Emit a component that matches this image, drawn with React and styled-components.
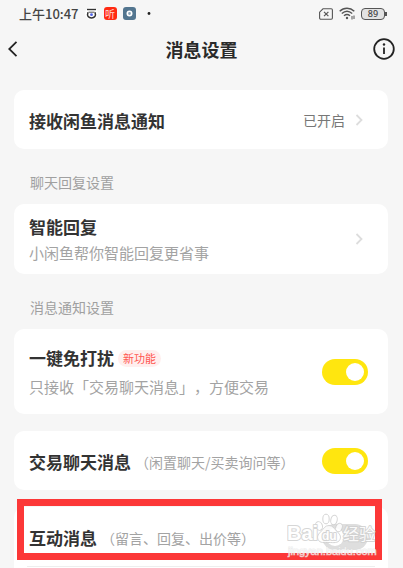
import styled, { createGlobalStyle } from "styled-components";

const GlobalStyle = createGlobalStyle`
  * {
    box-sizing: border-box;
  }
  body {
    margin: 0;
    background: #f6f6f6;
    color: #333333;
    font-family: "Noto Sans CJK SC", sans-serif;
    text-spacing-trim: space-all;
  }
`;

const Page = styled.div`
  display: flex;
  flex-direction: column;
  min-height: 100vh;
`;

const StatusBar = styled.div`
  display: flex;
  align-items: center;
  justify-content: space-between;
  height: 27px;
  padding: 0 16px 0 19px;
`;
const StatusGroup = styled.div`
  display: flex;
  align-items: center;
  gap: 6px;
`;
const Clock = styled.span`
  font-size: 13px;
  line-height: 27px;
  font-weight: 500;
  color: #444444;
`;
const AppBadge = styled.span`
  display: flex;
  align-items: center;
  justify-content: center;
  width: 13px;
  height: 13px;
  border-radius: 3px;
  background: #ff2a12;
  color: #ffd9d2;
  font-size: 10px;
  line-height: 13px;
`;
const Battery = styled.span`
  position: relative;
  width: 24px;
  height: 12px;
  border: 1px solid #555555;
  border-radius: 4px;
  background: #e2e2e2;
  color: #444444;
  font-family: "Noto Sans", sans-serif;
  font-size: 9px;
  font-weight: 500;
  line-height: 10px;
  text-align: center;
  margin-right: 2px;
  &::after {
    content: "";
    position: absolute;
    right: -3px;
    top: 3px;
    width: 2px;
    height: 4px;
    background: #555555;
  }
`;

const NavBar = styled.header`
  display: grid;
  grid-template-columns: 40px 1fr 40px;
  align-items: center;
  height: 43px;
`;
const NavTitle = styled.h1`
  margin: 0;
  font-size: 18px;
  line-height: 24px;
  font-weight: 700;
  text-align: center;
  color: #2a2a2a;
`;
const NavButton = styled.button`
  display: flex;
  justify-content: ${({ $side }) => ($side === "left" ? "flex-start" : "flex-end")};
  padding: 0 8px;
  border: 0;
  background: none;
  color: #222222;
  cursor: pointer;
`;

const Content = styled.main`
  display: flex;
  flex: 1;
  flex-direction: column;
  padding: 20px 15px 0 14px;
`;
const Card = styled.section`
  position: relative;
  flex: ${({ $open }) => ($open ? "1 0 auto" : "none")};
  background: #ffffff;
  border-radius: ${({ $open }) => ($open ? "10px 10px 0 0" : "10px")};
  & + & {
    margin-top: 17px;
  }
`;
const SectionLabel = styled.h2`
  margin: 0;
  padding: 21px 16px 10px;
  font-size: 14px;
  line-height: 24px;
  font-weight: 400;
  color: #a0a0a0;
`;
const Row = styled.div`
  display: flex;
  align-items: center;
  justify-content: space-between;
  min-height: ${({ $height }) => $height || "59px"};
  padding: 0 20px 0 15px;
`;
const LinkRow = styled(Row).attrs({ as: "a" })`
  padding-right: 25px;
  color: inherit;
  text-decoration: none;
`;
const Texts = styled.div`
  display: flex;
  flex-direction: column;
  gap: ${({ $gap }) => $gap || "0"};
  padding-top: 2px;
`;
const TitleLine = styled.div`
  display: flex;
  align-items: center;
  white-space: nowrap;
`;
const Title = styled.label`
  font-size: 17px;
  line-height: 24px;
  font-weight: 700;
`;
const Hint = styled.span`
  font-size: 15px;
  line-height: 24px;
  color: #a3a3a3;
  white-space: nowrap;
`;
const InlineHint = styled(Hint)`
  margin-left: 4px;
  font-size: 14px;
`;
const NewTag = styled.span`
  margin-left: 4px;
  padding: 0 5px;
  border-radius: 9px;
  background: #ffefee;
  color: #ff5550;
  font-size: 11px;
  line-height: 17px;
`;
const Value = styled.span`
  display: flex;
  align-items: center;
  gap: 10px;
  font-size: 14px;
  line-height: 24px;
  color: #777777;
`;
const Switch = styled.input.attrs({ type: "checkbox", role: "switch" })`
  appearance: none;
  flex: none;
  width: 46px;
  height: 26px;
  margin: 0;
  padding: 4px;
  border-radius: 13px;
  background: #dedede;
  cursor: pointer;
  &::before {
    content: "";
    display: block;
    width: 18px;
    height: 18px;
    border-radius: 50%;
    background: #ffffff;
  }
  &:checked {
    background: #ffe60f;
  }
  &:checked::before {
    margin-left: auto;
  }
`;
const Divider = styled.hr`
  height: 1px;
  margin: 0 13px;
  border: 0;
  background: #eeeeee;
`;
const HighlightFrame = styled.div`
  position: absolute;
  top: -8px;
  left: 3px;
  right: 6px;
  height: 61px;
  border: 7px solid #fc3838;
  pointer-events: none;
`;
const Watermark = styled.svg`
  position: absolute;
  top: 4px;
  right: 9px;
  opacity: 0.85;
  pointer-events: none;
`;

function Chevron() {
  return (
    <svg width="8" height="12" viewBox="0 0 8 12" fill="none" stroke="#dddddd" strokeWidth="1.8">
      <path d="M1.5 1l5 5-5 5" />
    </svg>
  );
}

function StatusIcons() {
  return (
    <>
      <svg width="13" height="13" viewBox="0 0 13 13">
        <circle cx="6.5" cy="6.5" r="6.5" fill="#ffffff" />
        <path d="M2 2.5h9" stroke="#333333" strokeWidth="1.4" />
        <path d="M3 5.2C1.6 9 3.6 11 6.5 11S11.4 9 10 5.2" fill="none" stroke="#333333" strokeWidth="1.5" />
        <path d="M3.5 5.2h6" stroke="#555555" strokeWidth="1" />
        <circle cx="6.5" cy="7.7" r="1.4" fill="#4f63e8" />
      </svg>
      <AppBadge>听</AppBadge>
      <svg width="13" height="13" viewBox="0 0 13 13">
        <rect width="13" height="13" rx="3" fill="#52758f" />
        <circle cx="6.5" cy="6.5" r="2.2" fill="#8ba5b8" stroke="#ffffff" strokeWidth="1.6" />
      </svg>
      <svg width="13" height="13" viewBox="0 0 13 13">
        <circle cx="7" cy="6.5" r="1.4" fill="#222222" />
      </svg>
    </>
  );
}

function SignalIcons() {
  return (
    <>
      <svg width="14" height="12" viewBox="0 0 14 12" fill="none" stroke="#555555">
        <path d="M4 .8h8.2a1.2 1.2 0 0 1 1.2 1.2v8a1.2 1.2 0 0 1-1.2 1.2H1.8A1.2 1.2 0 0 1 .6 10V4.2z" strokeWidth="1.1" />
        <path d="M5 3.8l4.4 4.4M9.4 3.8L5 8.2" strokeWidth="1.2" />
      </svg>
      <svg width="16" height="13" viewBox="0 0 16 13" fill="none" stroke="#555555" strokeWidth="1.4">
        <path d="M.7 4.2c4.2-4 10.4-4 14.6 0" />
        <path d="M2.8 6.5c3.2-2.9 7.2-2.9 10.4 0" />
        <path d="M5 8.7c2-1.7 4-1.7 6 0" />
        <circle cx="8" cy="11" r="1.2" fill="#555555" stroke="none" />
        <path d="M13 9v3.500M15 8.500V12" strokeWidth="1" />
      </svg>
    </>
  );
}

function BaiduMark() {
  return (
    <Watermark width="92" height="48" viewBox="0 0 92 48" fill="#ffffff" stroke="#cfcfcf">
      <g strokeWidth="1">
        <ellipse cx="32" cy="15" rx="3.4" ry="4.4" transform="rotate(-18 32 15)" />
        <ellipse cx="39" cy="8" rx="3.2" ry="4.8" />
        <ellipse cx="47" cy="9" rx="3.2" ry="4.8" transform="rotate(12 47 9)" />
        <ellipse cx="52" cy="16.5" rx="3.2" ry="4.400" transform="rotate(20 52 16.5)" />
        <path d="M42 14.500c4 0 5 3 7.500 5.500 3 3 5 5 3.500 8.500-2 4-6.500 3-11 3s-9 1-11-3c-1.500-3.500.5-5.500 3.500-8.500 2.500-2.500 3.500-5.500 7.500-5.500z" />
      </g>
      <g paintOrder="stroke" strokeWidth="2" strokeLinejoin="round" fontWeight="700">
        <text x="0" y="29" fontFamily="Liberation Sans, sans-serif" fontSize="20">Bai</text>
        <text x="35" y="29" fontFamily="Liberation Sans, sans-serif" fontSize="12">du</text>
        <text x="56" y="29" fontFamily="Noto Sans CJK SC, sans-serif" fontSize="16" fontWeight="400">经验</text>
      </g>
      <text
        x="1"
        y="44"
        fontFamily="Liberation Sans, sans-serif"
        fontSize="11"
        fill="#f7f7f7"
        stroke="#dddddd"
        strokeWidth="1"
        strokeOpacity="0.6"
        paintOrder="stroke"
      >
        jingyan.baidu.com
      </text>
    </Watermark>
  );
}

function SwitchRow({ id, title, hint, on }) {
  return (
    <Row>
      <Texts>
        <TitleLine>
          <Title htmlFor={id}>{title}</Title>
          <InlineHint>{hint}</InlineHint>
        </TitleLine>
      </Texts>
      <Switch id={id} defaultChecked={on} />
    </Row>
  );
}

export default function App() {
  return (
    <Page>
      <GlobalStyle />
      <StatusBar>
        <StatusGroup>
          <Clock>上午10:47</Clock>
          <StatusIcons />
        </StatusGroup>
        <StatusGroup>
          <SignalIcons />
          <Battery>89</Battery>
        </StatusGroup>
      </StatusBar>
      <NavBar>
        <NavButton $side="left" aria-label="返回">
          <svg width="10" height="16" viewBox="0 0 10 16" fill="none" stroke="currentColor" strokeWidth="1.8">
            <path d="M8.5.8L1.200 8l7.300 7.200" />
          </svg>
        </NavButton>
        <NavTitle>消息设置</NavTitle>
        <NavButton $side="right" aria-label="说明">
          <svg width="22" height="22" viewBox="0 0 22 22" fill="none" stroke="currentColor" strokeWidth="1.8">
            <circle cx="11" cy="11" r="9.8" />
            <path d="M11 9.500V16" />
            <circle cx="11" cy="6.5" r="1.2" fill="currentColor" stroke="none" />
          </svg>
        </NavButton>
      </NavBar>
      <Content>
        <Card>
          <LinkRow href="#notify">
            <Texts>
              <Title as="span">接收闲鱼消息通知</Title>
            </Texts>
            <Value>
              已开启
              <Chevron />
            </Value>
          </LinkRow>
        </Card>
        <SectionLabel>聊天回复设置</SectionLabel>
        <Card>
          <LinkRow href="#smart-reply" $height="70px">
            <Texts $gap="2px">
              <Title as="span">智能回复</Title>
              <Hint>小闲鱼帮你智能回复更省事</Hint>
            </Texts>
            <Chevron />
          </LinkRow>
        </Card>
        <SectionLabel>消息通知设置</SectionLabel>
        <Card>
          <Row $height="85px">
            <Texts $gap="5px">
              <TitleLine>
                <Title htmlFor="quiet">一键免打扰</Title>
                <NewTag>新功能</NewTag>
              </TitleLine>
              <Hint>只接收「交易聊天消息」，方便交易</Hint>
            </Texts>
            <Switch id="quiet" defaultChecked />
          </Row>
        </Card>
        <Card>
          <SwitchRow id="trade" title="交易聊天消息" hint="（闲置聊天/买卖询问等）" on />
        </Card>
        <Card $open>
          <SwitchRow id="interact" title="互动消息" hint="（留言、回复、出价等）" />
          <Divider />
          <HighlightFrame />
          <BaiduMark />
        </Card>
      </Content>
    </Page>
  );
}
